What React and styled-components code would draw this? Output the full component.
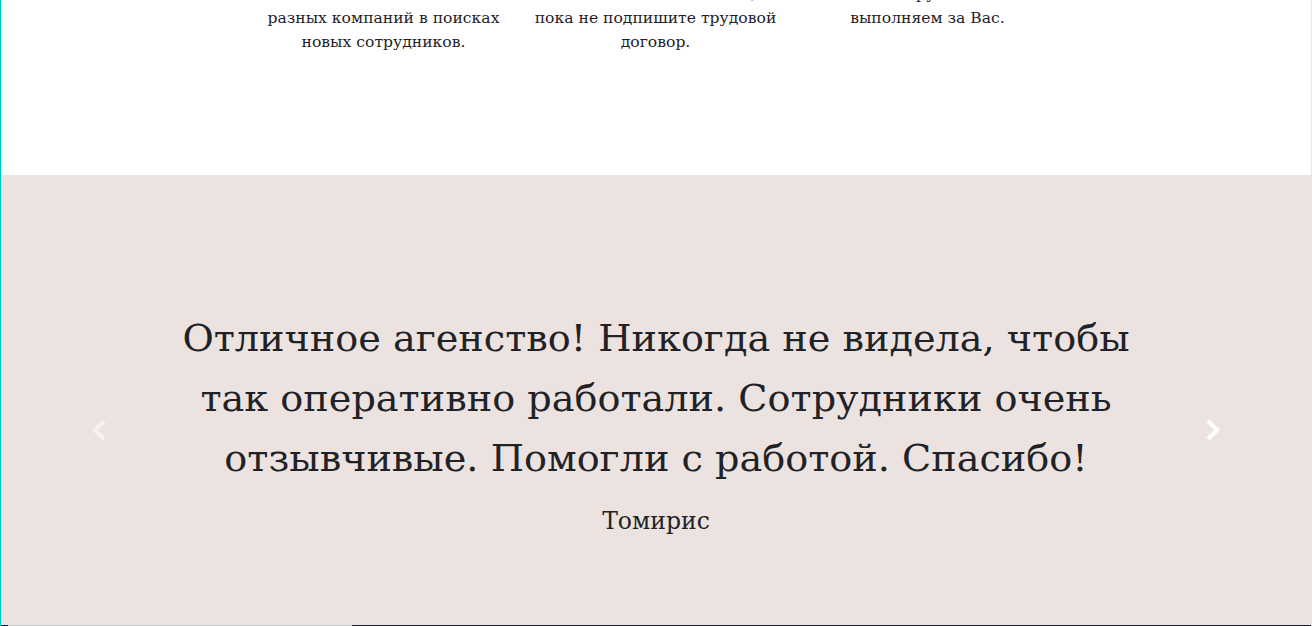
import React from "react";
import styled, { createGlobalStyle } from "styled-components";

const Global = createGlobalStyle`
  html, body { margin: 0; padding: 0; background: #fff; }
  body { font-family: "DejaVu Serif", "Liberation Serif", serif; color: #212529; overflow: hidden; }
`;

const Page = styled.div`
  border-left: 1px solid #00c3c6;
  border-right: 1px solid #e6e6e6;
  width: 1312px;
  box-sizing: border-box;
`;

const Features = styled.section`
  height: 175px;
  overflow: hidden;
  background: #fff;
`;

const FeatureRow = styled.div`
  display: grid;
  grid-template-columns: repeat(3, 272px);
  justify-content: center;
  margin: -18px 0 0 -1px;
`;

const FeatureText = styled.p`
  margin: 0;
  font-size: 15.6px;
  line-height: 24px;
  text-align: center;
  color: #1f2327;
  padding: 0 8px;
`;

const Line = styled.span`
  display: block;
  white-space: nowrap;
`;

const Testimonials = styled.section`
  position: relative;
  height: 450px;
  box-sizing: border-box;
  padding-top: 133px;
  background: #ece3e1;
  text-align: center;
`;

const Quote = styled.blockquote`
  margin: 0;
  font-size: 38.2px;
  line-height: 60px;
  color: #1f2327;
`;

const Author = styled.div`
  margin-top: 15px;
  font-size: 23.5px;
  line-height: 36px;
  color: #1f2327;
`;

const Control = styled.button`
  position: absolute;
  top: 60px;
  bottom: 0;
  ${(p) => (p.$side === "left" ? "left: 0;" : "right: 0;")}
  width: 15%;
  display: flex;
  align-items: center;
  justify-content: center;
  border: 0;
  background: transparent;
  padding: 0;
  opacity: ${(p) => (p.$active ? 1 : 0.55)};
  cursor: pointer;
`;

const Footer = styled.footer`
  background: #1b2030;
  height: 40px;
  padding-left: 7px;
`;

const FooterBar = styled.div`
  width: 344px;
  height: 1px;
  background: #c8c8c8;
`;

const Chevron = ({ dir }) => (
  <svg width="16" height="22" viewBox="0 0 16 22" aria-hidden="true">
    <polyline
      points={dir === "left" ? "13,2 4,11 13,20" : "3,2 12,11 3,20"}
      fill="none"
      stroke="#fff"
      strokeWidth="4.2"
    />
  </svg>
);

const features = [
  ["Нам известны сотни", "разных компаний в поисках", "новых сотрудников."],
  ["Мы останемся на связи,", "пока не подпишите трудовой", "договор."],
  ["Вся рутина", "выполняем за Вас."],
];

export default function App() {
  return (
    <Page>
      <Global />
      <Features>
        <FeatureRow>
          {features.map((lines, i) => (
            <FeatureText key={i}>
              {lines.map((l, j) => (
                <Line key={j}>{l}</Line>
              ))}
            </FeatureText>
          ))}
        </FeatureRow>
      </Features>
      <Testimonials>
        <Quote>
          <Line>Отличное агенство! Никогда не видела, чтобы</Line>
          <Line>так оперативно работали. Сотрудники очень</Line>
          <Line>отзывчивые. Помогли с работой. Спасибо!</Line>
        </Quote>
        <Author>Томирис</Author>
        <Control $side="left" aria-label="Previous">
          <Chevron dir="left" />
        </Control>
        <Control $side="right" $active aria-label="Next">
          <Chevron dir="right" />
        </Control>
      </Testimonials>
      <Footer>
        <FooterBar />
      </Footer>
    </Page>
  );
}
